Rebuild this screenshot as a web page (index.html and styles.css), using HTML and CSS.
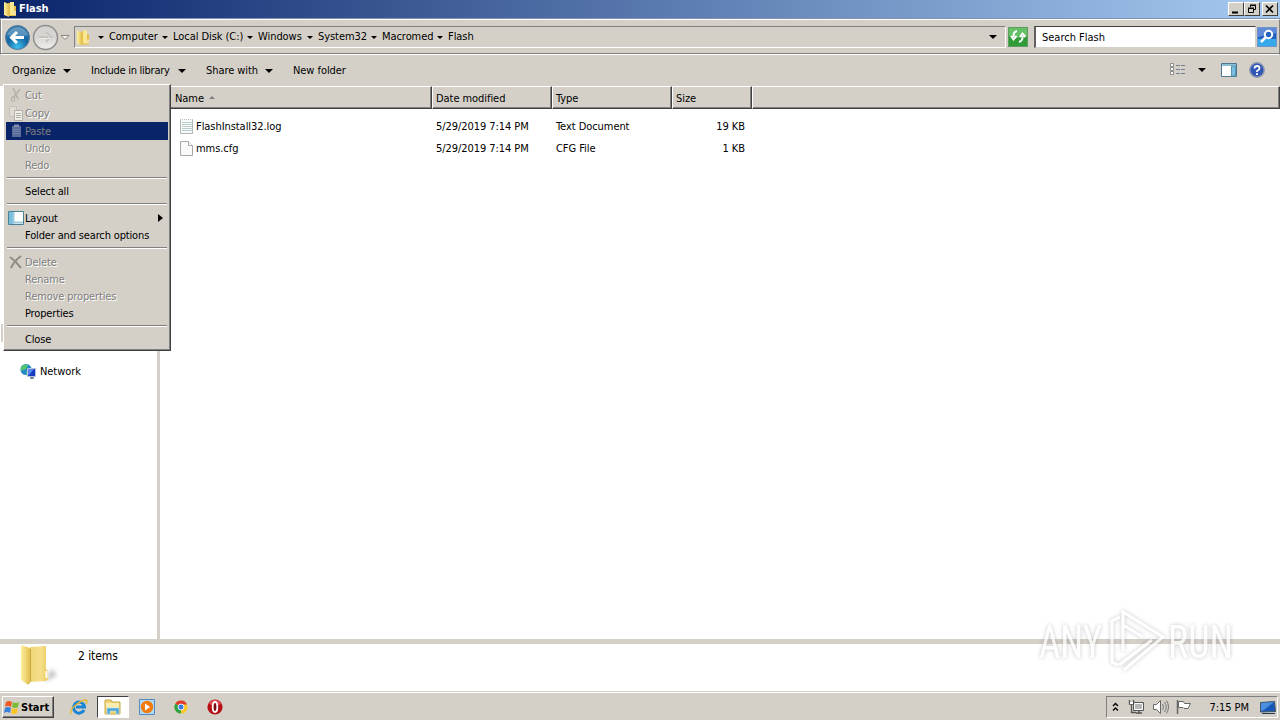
FILE: index.html
```html
<!DOCTYPE html>
<html lang="en">
<head>
  <meta charset="UTF-8" />
  <title>Flash</title>
  <link rel="stylesheet" href="styles.css">
</head>
<body>
  <svg class="defs" width="0" height="0">
    <defs>
      <linearGradient id="gold" x1="0" x2="1"><stop offset="0" stop-color="#fff0a0"/><stop offset="1" stop-color="#e2bf50"/></linearGradient>
      <linearGradient id="goldDark" x1="0" x2="1"><stop offset="0" stop-color="#eed578"/><stop offset=".6" stop-color="#f5df88"/><stop offset="1" stop-color="#e8ca60"/></linearGradient>
      <radialGradient id="blueBall" cx=".5" cy=".9" r=".9"><stop offset="0" stop-color="#3fc0f0"/><stop offset=".5" stop-color="#1468a4"/><stop offset="1" stop-color="#3c7cae"/></radialGradient>
      <linearGradient id="greyBall" x1="0" x2="0" y1="0" y2="1"><stop offset="0" stop-color="#d2d2d2"/><stop offset=".5" stop-color="#d8d6d2"/><stop offset="1" stop-color="#f0efed"/></linearGradient>
      <symbol id="folder" viewBox="0 0 16 16">
        <path d="M6 2h6v3h2v10H6z" fill="#e4bd49"/>
        <path d="M2 1l5 2v13l-5-2z" fill="url(#gold)"/>
        <path d="M8 1h4v13H8z" fill="#f9e88f"/>
        <path d="M13 10v4" stroke="#fff"/>
      </symbol>
    </defs>
  </svg>
  <div class="window">
    <header class="titlebar">
      <svg class="title-icon" width="16" height="16"><use href="#folder"/></svg>
      <span class="title">Flash</span>
      <div class="window-buttons">
        <button><svg width="14" height="12"><path d="M3 9.500h6" stroke="#000" stroke-width="2"/></svg></button>
        <button><svg width="14" height="12" fill="none" stroke="#000"><path d="M5.500 4V2.500h5v4H9M5 2h6" /><path d="M3.500 5.500h5v4h-5zM3 5h6"/></svg></button>
        <button class="close"><svg width="14" height="12"><path d="M3 2.500l7 7M10 2.500l-7 7" stroke="#000" stroke-width="1.600"/></svg></button>
      </div>
    </header>
    <div class="address-row">
      <svg class="nav-buttons" width="66" height="28">
        <circle cx="13.500" cy="13.500" r="12" fill="url(#blueBall)" stroke="#52789a"/>
        <path d="M3 11a11 11 0 0 1 21 0q-10 4-21 0" fill="#fff" opacity=".25"/>
        <path d="M20 13.500H8M13 8l-5.500 5.500L13 19" fill="none" stroke="#fff" stroke-width="3"/>
        <circle cx="41.500" cy="13.500" r="12" fill="url(#greyBall)" stroke="#8e8e8e" stroke-width="1.500"/>
        <path d="M35 13.500h11M42 8.500l5 5-5 5" fill="none" stroke="#c3c1bc" stroke-width="2.500"/>
        <path d="M35 14.500h11M42 9.500l5 5-5 5" fill="none" stroke="#eeedea"/>
        <path d="M57 11.500h8L61 15.500z" fill="#f4f3f0" stroke="#8b8882"/>
      </svg>
      <div class="address">
        <svg width="16" height="17"><use href="#folder"/></svg>
        <div class="crumbs">
          <span class="crumb">Computer</span>
          <span class="crumb">Local Disk (C:)</span>
          <span class="crumb">Windows</span>
          <span class="crumb">System32</span>
          <span class="crumb">Macromed</span>
          <span class="crumb">Flash</span>
        </div>
        <i class="arrow"></i>
      </div>
      <svg class="refresh" width="20" height="20">
        <rect x=".5" y=".5" width="19" height="19" fill="#2f9c38" stroke="#5f9c60"/>
        <path d="M1 1h18v8q-9 3-18 0z" fill="#66c066"/>
        <path d="M9 4Q5 5 5.500 10M3 9l2.500 3.500L8.500 9M11 15q4-1 3.500-6M12 10l2.500-3.500L17.500 10" fill="none" stroke="#fff" stroke-width="2"/>
      </svg>
      <div class="search">Search Flash</div>
      <svg class="search-button" width="20" height="20">
        <rect x=".5" y=".5" width="19" height="19" fill="#2561c0" stroke="#6f93c8"/>
        <path d="M1 12h18v7H1z" fill="#35a9ec"/>
        <path d="M1 1h18v5L1 10z" fill="#5f8bd9"/>
        <circle cx="11.500" cy="7.500" r="3.700" fill="#2561c0" stroke="#fff" stroke-width="2"/>
        <path d="M8.500 10.500L4 15" stroke="#fff" stroke-width="2.500"/>
      </svg>
    </div>
    <div class="toolbar">
      <span class="tool organize">Organize <i class="arrow"></i></span>
      <span class="tool include">Include in library <i class="arrow"></i></span>
      <span class="tool share">Share with <i class="arrow"></i></span>
      <span class="tool">New folder</span>
      <div class="tool-icons">
        <svg width="16" height="13"><g fill="#fff" stroke="#8b8b8b"><path d="M.5.5h3v3h-3zM.5 4.500h3v3h-3zM.5 8.500h3v3h-3z"/></g><path d="M6 2.500h9M6 6.500h9M6 10.500h9" stroke="#747f91" stroke-dasharray="4 1"/></svg>
        <i class="arrow"></i>
        <svg width="16" height="14"><path d="M.5.5h15v13H.5z" fill="#fff" stroke="#4b7793"/><path d="M1 2h14" stroke="#8ebed4" stroke-width="2"/><path d="M10.500 3v10h4V3z" fill="#79bedf" stroke="#5693b0"/></svg>
        <svg width="16" height="16"><circle cx="8" cy="8" r="7.200" fill="#3156b5" stroke="#8c98ae" stroke-width="1.500"/><path d="M5.500 6.500Q5.500 4 8 4t2.500 2.300Q10.500 8 8 9v1" fill="none" stroke="#fff" stroke-width="1.800"/><path d="M7 11.200h2v1.800H7z" fill="#fff"/></svg>
      </div>
    </div>
    <main class="content">
      <aside class="sidebar">
        <div class="sidebar-item selected"></div>
        <div class="sidebar-item">
          <svg width="17" height="16"><circle cx="6" cy="5.500" r="5.500" fill="#2588c8"/><path d="M2 2q4-2 6-1L6 5 3 6 1 7Q0 4 2 2M6 8l4-2v5l-3 1z" fill="#55c46a"/><path d="M7.500 4.500h8v8h-8z" fill="#153bc0" stroke="#b5c2dc"/><path d="M8 5h6l-5 6H8z" fill="#5a84ee"/><path d="M10 14h4M12 13v2" stroke="#6b7890" stroke-width="1.500"/></svg>
          <span>Network</span>
        </div>
      </aside>
      <section class="files">
        <div class="columns">
          <span class="column">Name <i class="sort"></i></span>
          <span class="column">Date modified</span>
          <span class="column">Type</span>
          <span class="column">Size</span>
          <span class="column"></span>
        </div>
        <div class="file">
          <span class="name">
            <svg width="14" height="16"><path d="M.5.500h12v14H.5z" fill="#f7faf9" stroke="#b3b7b6"/><path d="M1 .5h12" stroke="#fff" stroke-dasharray="1 1"/><path d="M2 3.500h10M2 5.500h10M2 7.500h10M2 9.500h10M2 11.500h10" stroke="#b9cccb"/></svg>
            FlashInstall32.log
          </span>
          <span>5/29/2019 7:14 PM</span>
          <span>Text Document</span>
          <span class="size">19 KB</span>
        </div>
        <div class="file">
          <span class="name">
            <svg width="14" height="16"><path d="M.5.500h8l4 4v10H.5z" fill="#fafafa" stroke="#a8a8a8"/><path d="M8.500.5v4h4" fill="#fff" stroke="#a8a8a8"/></svg>
            mms.cfg
          </span>
          <span>5/29/2019 7:14 PM</span>
          <span>CFG File</span>
          <span class="size">1 KB</span>
        </div>
      </section>
    </main>
    <footer class="details">
      <svg width="40" height="44">
        <defs><filter id="soft"><feGaussianBlur stdDeviation="2"/></filter></defs>
        <path d="M25 38l12-7-6-6z" fill="#999" opacity=".6" filter="url(#soft)"/>
        <path d="M10 3l16-1v23l2 2v8l-2 2-16 1z" fill="url(#goldDark)"/>
        <path d="M1 1l9 3v33l-2 4-7-5z" fill="url(#gold)"/>
        <path d="M10.500 5v32l-2 3" fill="none" stroke="#c9a945"/>
        <path d="M26.500 27v7" stroke="#fff" stroke-width="2"/>
      </svg>
      <span>2 items</span>
    </footer>
  </div>
  <div class="taskbar">
    <button class="start">
      <svg width="16" height="16"><path d="M2 3q3-2 6 0L7 8Q4 6 1 8z" fill="#ee5a24"/><path d="M9 3q3 2 6 0l-1 5q-3 2-6 0z" fill="#7abb36"/><path d="M1 9q3-2 6 0l-1 5q-3-2-6 0z" fill="#3a83dc"/><path d="M8 9q3 2 6 0l-1 5q-3 2-6 0z" fill="#f8c324"/></svg>
      <span>Start</span>
    </button>
    <div class="pinned">
      <span class="task"><svg width="18" height="16"><path d="M14 11a5.500 5.500 0 1 1 .5-3H6" fill="none" stroke="#1a84d4" stroke-width="3"/><path d="M1 15Q-1 11 7 5t10-3q0 1-1 3" fill="none" stroke="#e8b92d" stroke-width="1.400"/></svg></span>
      <span class="task active"><svg width="18" height="16"><path d="M1 1h6l1 2h8v12H1z" fill="#f1d477" stroke="#c9a945"/><path d="M2 4h13v5H2z" fill="#fbeeb0"/><path d="M3 15V9h12v6h-3v-3H6v3z" fill="#4ba5dd" stroke="#b9def2" stroke-width=".6"/></svg></span>
      <span class="task"><svg width="16" height="16"><path d="M.5.500h15v15H.5z" fill="#b7d8f2" stroke="#4a8dc8"/><circle cx="8" cy="8" r="6.200" fill="#f07c10"/><path d="M6 4.500v7l5-3.500z" fill="#fff"/></svg></span>
      <span class="task"><svg width="14" height="14" viewBox="0 0 16 16"><circle cx="8" cy="8" r="7.500" fill="#fac828"/><path d="M8 8L1.500 4.200A7.500 7.500 0 0 1 14.800 5H8z" fill="#e03a2e"/><path d="M1.500 4.200L8 8l0 7.500A7.500 7.500 0 0 1 1.500 4.200" fill="#2ea24a"/><circle cx="8" cy="8" r="3.400" fill="#3c78e0" stroke="#fff"/></svg></span>
      <span class="task"><svg width="16" height="16"><circle cx="8" cy="8" r="7.600" fill="#b60f16"/><path d="M2 5a6.500 6.500 0 0 1 12 0q-6 3-12 0" fill="#e04a4c"/><ellipse cx="8" cy="8" rx="2.300" ry="5" fill="#7d0b10" stroke="#fff" stroke-width="1.800"/></svg></span>
    </div>
    <div class="tray">
      <svg width="8" height="10"><path d="M1 4l2.500-2.500L6 4M1 8.500L3.500 6 6 8.500" fill="none" stroke="#000" stroke-width="1.400"/></svg>
      <svg class="net" width="16" height="16"><path d="M5.500 3.500h10v8h-10z" fill="#b7b7b7" stroke="#555"/><path d="M6.500 4.500h8v6h-8z" fill="none" stroke="#fff"/><path d="M8 14h6M11 12v2" stroke="#555" stroke-width="1.500"/><path d="M1.500 1v4h4V1M3.500 5v8.500H8" fill="none" stroke="#555" stroke-width="1.300"/><path d="M2 3h3v2H2z" fill="#fff"/></svg>
      <svg class="sound" width="18" height="16"><path d="M1.500 5.500h3l4-4v13l-4-4h-3z" fill="#fff" stroke="#666"/><path d="M10.500 5q2 3 0 6M12.500 3q3.500 5 0 10M14.500 1.500q4 6.500 0 13" fill="none" stroke="#777"/></svg>
      <svg class="flag" width="18" height="16"><path d="M1.500 1v14" stroke="#666" stroke-width="1.500"/><path d="M2.500 2.500h5l1 2h6l-2.500 5H8l-1-1H2.500z" fill="#fff" stroke="#666"/></svg>
      <span class="clock">7:15 PM</span>
      <svg width="16" height="14"><path d="M.5 2.500l14-1 1 10-15 .5z" fill="#1757b5" stroke="#456"/><path d="M1 3l13-1-10 8-3 1z" fill="#4b8fe0"/><path d="M2 13.500h13" stroke="#263852"/></svg>
    </div>
  </div>

  <!-- Organize drop-down -->
  <div class="menu">
    <div class="item icon disabled"><svg width="16" height="16"><path d="M5 1l4 9M12 2L5 11" stroke="#b3b0a7" stroke-width="1.500"/><path d="M3.500 10h3v4h-3zM8 10h2v3" fill="none" stroke="#b3b0a7"/></svg><span>Cut</span></div>
    <div class="item icon disabled"><svg width="16" height="16"><path d="M1.500 1.500h7v10h-7z" fill="#dedbd3" stroke="#c5c2ba"/><path d="M6.500 5.500h8v10h-8z" fill="#f0efeb" stroke="#b2afa7"/><path d="M8 8.500h5M8 10.500h5M8 12.500h5" stroke="#b2afa7"/></svg><span>Copy</span></div>
    <div class="item icon disabled highlighted"><svg width="16" height="16"><path d="M4 3h9v11H4z" fill="#5c6c9a"/><path d="M6 1.500h5V4H6z" fill="#8390b3"/><path d="M5 6.500h7M5 8.500h7M5 10.500h7" stroke="#7180aa"/></svg><span>Paste</span></div>
    <div class="item disabled">Undo</div>
    <div class="item disabled">Redo</div>
    <hr>
    <div class="item">Select all</div>
    <hr>
    <div class="item icon"><svg width="16" height="16"><path d="M.5 1.500h15v13H.5z" fill="#fff" stroke="#4b8097"/><path d="M1 2h4v12H1z" fill="#79bfe0"/><path d="M5 12.500h10M5.500 2v12" stroke="#9bcbdc" stroke-width="2"/></svg><span>Layout</span><i class="submenu"></i></div>
    <div class="item">Folder and search options</div>
    <hr>
    <div class="item icon disabled"><svg width="16" height="16"><path d="M2 3q6 4 11 11M13 2Q6 7 3 14" fill="none" stroke="#8f8c84" stroke-width="2"/></svg><span>Delete</span></div>
    <div class="item disabled">Rename</div>
    <div class="item disabled">Remove properties</div>
    <div class="item">Properties</div>
    <hr>
    <div class="item">Close</div>
  </div>

  <svg class="watermark" width="220" height="80">
    <text x="9" y="56" textLength="63" lengthAdjust="spacingAndGlyphs">ANY</text>
    <text x="138" y="56" textLength="65" lengthAdjust="spacingAndGlyphs">RUN</text>
    <path d="M90 15l-8 4v41l6 3M93 49V10l40 25-39 33M93 23l20 12M122 38L89 63"/>
  </svg>
</body>
</html>
```
FILE: styles.css
```css
body {
  margin: 0;
  width: 1280px;
  height: 720px;
  overflow: hidden;
  position: relative;
  background: #fff;
  color: #000;
  font-family: "DejaVu Sans Condensed", "DejaVu Sans", sans-serif;
  font-stretch: condensed;
  font-size: 11px;
  letter-spacing: -0.06px;
  line-height: 14px;
  white-space: nowrap;
}
svg {
  display: block;
  flex: none;
}
button {
  font: inherit;
  padding: 0;
}
.defs {
  position: absolute;
}
.window {
  height: 692px;
  display: flex;
  flex-direction: column;
}
.titlebar {
  height: 18px;
  display: flex;
  align-items: center;
  background: linear-gradient(to right, #0a246a, #a6caf0);
  border-bottom: 1px solid #8190b0;
}
.title-icon {
  margin-left: 2px;
}
.title {
  color: #fff;
  font-weight: bold;
  margin-left: 1px;
  flex: 1;
}
.window-buttons {
  display: flex;
  margin-right: 2px;
}
.window-buttons button {
  width: 16px;
  height: 14px;
  background: #d4d0c8;
  border: 1px solid;
  border-color: #fff #404040 #404040 #fff;
}
.window-buttons .close {
  margin-left: 2px;
}
.address-row {
  box-sizing: border-box;
  height: 36px;
  display: flex;
  align-items: flex-start;
  padding: 6px 2px 0 3px;
  background: #d4d0c8;
  border: 1px solid #808080;
  border-top: 1px solid #fff;
  border-bottom: 1px solid #fff;
  box-shadow: inset 0 -1px #808080, inset 1px 0 #fff;
}
.nav-buttons {
  margin-top: -2px;
}
.address {
  box-sizing: border-box;
  width: 932px;
  height: 22px;
  margin-left: 4px;
  display: flex;
  align-items: center;
  border: 1px solid #808080;
  border-bottom-color: #fff;
  border-right-color: #fff;
}
.crumbs {
  flex: 1;
  display: grid;
  grid-template-columns: 64px 85px 60px 64px 66px 60px;
  margin-left: 7px;
}
.crumb {
  display: flex;
  align-items: center;
  gap: 5px;
}
.crumb::before {
  content: "";
  border: 3px solid transparent;
  border-top-color: #000;
  border-bottom: 0;
}
.arrow {
  border: 4px solid transparent;
  border-top-color: #000;
  border-bottom: 0;
}
.address .arrow {
  margin-right: 8px;
}
.refresh {
  margin: 1px 0 0 2px;
}
.search {
  box-sizing: border-box;
  width: 222px;
  height: 22px;
  margin-left: 6px;
  padding: 4px 6px 2px;
  background: #fff;
  border: 1px solid #d4d0c8;
  border-top-color: #404040;
  border-left: 2px solid #606060;
  letter-spacing: -0.01px;
}
.search-button {
  margin: 1px 0 0 1px;
}
.toolbar {
  box-sizing: border-box;
  height: 31px;
  display: flex;
  align-items: center;
  padding: 0 15px 0 12px;
  background: #d4d0c8;
}
.tool {
  box-sizing: border-box;
  display: flex;
  align-items: center;
  justify-content: space-between;
}
.organize {
  width: 59px;
  margin-right: 20px;
}
.include {
  width: 95px;
  margin-right: 20px;
  letter-spacing: -0.25px;
}
.share {
  width: 67px;
  margin-right: 20px;
}
.tool-icons {
  margin-left: auto;
  display: flex;
  align-items: center;
  padding-bottom: 2px;
}
.tool-icons .arrow {
  margin: 0 15px 0 12px;
}
.tool-icons svg:last-child {
  margin-left: 12px;
}
.content {
  height: 553px;
  display: flex;
}
.sidebar {
  width: 157px;
  height: 315px;
  min-height: 315px;
  border-right: 3px solid #d4d0c8;
  background: #fff;
  padding-top: 238px;
}
.sidebar-item {
  height: 18px;
  display: flex;
  align-items: center;
  gap: 3px;
  padding-left: 20px;
}
.sidebar-item.selected {
  width: 60px;
  margin-left: 1px;
  background: #d4d0c8;
  margin-bottom: 21px;
}
.files {
  flex: 1;
}
.columns, .file {
  display: grid;
  grid-template-columns: 272px 120px 120px 80px 1fr;
}
.column {
  box-sizing: border-box;
  height: 23px;
  display: flex;
  align-items: center;
  gap: 5px;
  padding: 2px 3px 0;
  background: #d4d0c8;
  border-top: 1px solid #fff;
  border-left: 1px solid #fff;
  border-right: 1px solid #404040;
  border-bottom: 1px solid #404040;
  box-shadow: inset -1px -1px #808080;
}
.column:first-child {
  padding-left: 14px;
}
.columns {
  margin-bottom: 7px;
}
.sort {
  border: 3px solid transparent;
  border-top: 0;
  border-bottom-color: #808080;
  margin-bottom: 2px;
}
.file {
  height: 22px;
  align-items: center;
}
.file span {
  padding-left: 4px;
}
.file .name {
  display: flex;
  align-items: center;
  gap: 2px;
  padding-left: 20px;
}
.file .size {
  text-align: right;
  padding-right: 7px;
}
.details {
  flex: 1;
  display: flex;
  border-top: 5px solid #d4d0c8;
  border-bottom: 1px solid #d4d0c8;
  padding-left: 20px;
  background: #fff;
  font-size: 12px;
}
.details span {
  margin: 5px 0 0 18px;
}
.taskbar {
  box-sizing: border-box;
  height: 28px;
  display: flex;
  align-items: center;
  border-top: 1px solid #fff;
  background: #d4d0c8;
  padding: 1px 2px 0;
}
.start {
  box-sizing: border-box;
  width: 52px;
  height: 22px;
  display: flex;
  align-items: center;
  gap: 1px;
  padding-left: 1px;
  font-weight: bold;
  color: #000;
  background: #d4d0c8;
  border: 1px solid;
  border-color: #fff #404040 #404040 #fff;
  box-shadow: inset -1px -1px #808080;
}
.start span {
  padding-top: 2px;
}
.pinned {
  display: flex;
  margin-left: 9px;
  gap: 2px;
}
.task {
  box-sizing: border-box;
  width: 32px;
  height: 22px;
  display: flex;
  align-items: center;
  justify-content: center;
}
.task.active {
  background: #fff;
  border: 1px solid;
  border-color: #404040 #fff #fff #404040;
}
.tray {
  box-sizing: border-box;
  width: 172px;
  height: 22px;
  margin-left: auto;
  display: flex;
  align-items: center;
  padding: 0 1px 0 5px;
  border: 1px solid;
  border-color: #808080 #fff #fff #808080;
}
.tray .net {
  margin-left: 8px;
}
.tray .sound {
  margin-left: 8px;
}
.tray .flag {
  margin-left: 6px;
}
.clock {
  flex: 1;
  text-align: right;
  margin-right: 11px;
  padding-top: 2px;
}

.menu {
  position: absolute;
  left: 3px;
  top: 84px;
  box-sizing: border-box;
  width: 168px;
  height: 267px;
  padding: 1px 2px 0 2px;
  background: #d4d0c8;
  border: 1px solid;
  border-color: #fff #404040 #404040 #fff;
  box-shadow: inset -1px -1px #808080;
  letter-spacing: -0.15px;
}
.item {
  height: 17px;
  display: flex;
  align-items: center;
  padding-left: 19px;
}
.item.icon {
  height: 18px;
  gap: 1px;
  padding-left: 2px;
}
.item.icon span {
  padding-top: 2px;
}
.item.disabled {
  color: #808080;
  text-shadow: 1px 1px #fff;
}
.item.highlighted {
  background: #0a246a;
  text-shadow: none;
}
.menu hr {
  height: 0;
  margin: 3px 1px 4px;
  border: 0;
  border-top: 1px solid #808080;
  border-bottom: 1px solid #fff;
}
.submenu {
  margin-left: auto;
  margin-right: 5px;
  border: 4px solid transparent;
  border-left: 5px solid #000;
  border-right: 0;
}

.watermark {
  position: absolute;
  left: 1030px;
  top: 602px;
  fill: #fff;
  font-family: Roboto, sans-serif;
  font-size: 46px;
  letter-spacing: 0;
  filter: drop-shadow(0 0 2px rgba(0, 0, 0, 0.3));
  opacity: 0.75;
}
.watermark path {
  fill: none;
  stroke: #fff;
  stroke-width: 3;
}
```
